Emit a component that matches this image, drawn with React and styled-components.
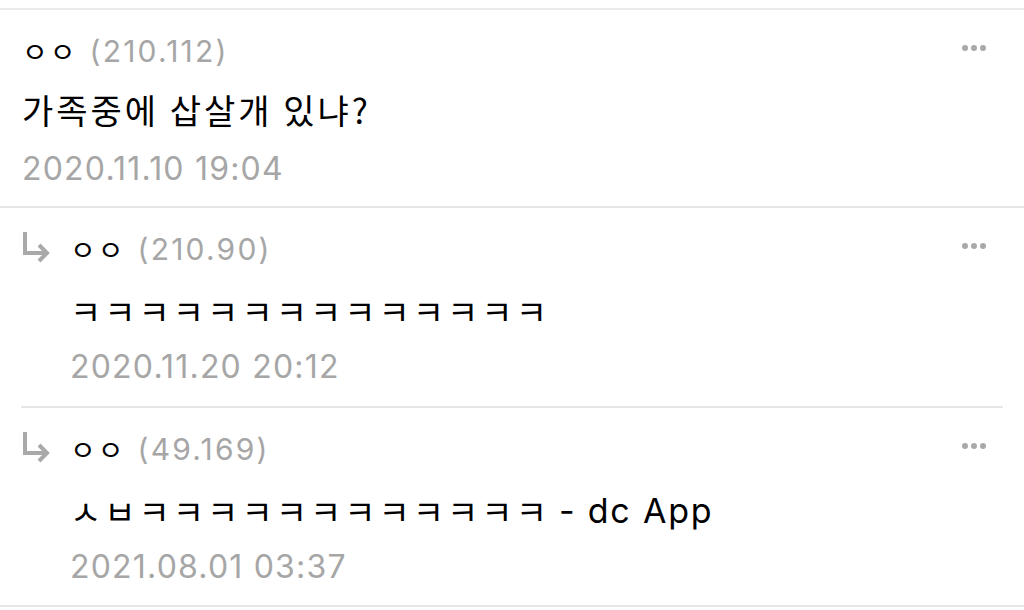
import React from "react";
import styled, { createGlobalStyle } from "styled-components";

const Global = createGlobalStyle`
  html, body { margin: 0; padding: 0; background: #fff; }
  body {
    font-family: Inter, "Noto Sans CJK KR", sans-serif;
    -webkit-font-smoothing: antialiased;
  }
`;

const List = styled.div`
  width: 1024px;
  height: 610px;
  padding-top: 8px;
  box-sizing: border-box;
  overflow: hidden;
  background: #fff;
`;

const Item = styled.div`
  display: flex;
  border-top: ${(p) => (p.$first ? "2px solid #ebebeb" : "none")};
  border-bottom: 2px solid #e6e6e6;
  margin: 0 ${(p) => (p.$inset ? "21px" : "0")};
  padding: 0 ${(p) => (p.$inset ? "17px" : "38px")} 0 ${(p) => (p.$inset ? "1px" : "22px")};
  height: ${(p) => p.$h}px;
`;

const Wrap = styled.div`
  flex: 1;
  display: flex;
  align-items: flex-start;
`;

const Arrow = styled.svg`
  flex: none;
  width: 30px;
  height: 34px;
  margin-top: 22px;
  margin-right: 18px;
`;

const Body = styled.div`
  flex: 1;
  display: flex;
  flex-direction: column;
  padding-top: 16px;
`;

const NameLine = styled.div`
  display: flex;
  align-items: center;
  height: 50px;
`;

const Nick = styled.span`
  font-family: "Noto Sans CJK KR", sans-serif;
  font-size: 28px;
  color: #000;
  letter-spacing: 2px;
`;

const Ip = styled.span`
  font-family: Inter, sans-serif;
  font-size: 30px;
  letter-spacing: 2.2px;
  color: #a6a6a6;
  margin-left: 12px;
`;

const Dots = styled.div`
  margin-left: auto;
  margin-top: -6px;
  display: flex;
  gap: 3px;
  align-self: center;
`;

const Dot = styled.span`
  width: 6px;
  height: 6px;
  border-radius: 50%;
  background: #a9a9a9;
`;

const Content = styled.div`
  display: flex;
  align-items: center;
  height: 74px;
  margin-top: ${(p) => (p.$reply ? -1 : -4)}px;
  margin-bottom: ${(p) => (p.$reply ? 1 : 4)}px;
  font-family: "Noto Sans CJK KR", sans-serif;
  font-size: 34px;
  letter-spacing: 3px;
  color: #000;
  white-space: nowrap;
`;

const Latin = styled.span`
  font-family: Inter, sans-serif;
  font-size: 34px;
  letter-spacing: 1.8px;
  margin-left: 9px;
  white-space: pre;
`;

const DateLine = styled.div`
  display: flex;
  align-items: center;
  height: 36px;
  font-family: Inter, sans-serif;
  font-size: 32px;
  letter-spacing: 1.2px;
  color: #a6a6a6;
`;

const ReplyArrow = () => (
  <Arrow viewBox="0 0 30 34">
    <path d="M3 2 V23 H24" fill="none" stroke="#a9a9a9" strokeWidth="4" />
    <path d="M17 15 L25 23 L17 31" fill="none" stroke="#a9a9a9" strokeWidth="4" />
  </Arrow>
);

const comments = [
  {
    ip: "(210.112)",
    text: [{ k: "가족중에 삽살개 있냐?" }],
    date: "2020.11.10 19:04",
    reply: false,
  },
  {
    ip: "(210.90)",
    text: [{ k: "ㅋㅋㅋㅋㅋㅋㅋㅋㅋㅋㅋㅋㅋㅋ" }],
    date: "2020.11.20 20:12",
    reply: true,
  },
  {
    ip: "(49.169)",
    text: [{ k: "ㅅㅂㅋㅋㅋㅋㅋㅋㅋㅋㅋㅋㅋㅋ" }, { l: "- dc App" }],
    date: "2021.08.01 03:37",
    reply: true,
  },
];

export default function App() {
  return (
    <>
      <Global />
      <List>
        {comments.map((c, i) => (
          <Item
            key={i}
            $first={i === 0}
            $inset={i === 1}
            $h={i === 0 ? 196 : i === 1 ? 198 : 197}
          >
            <Wrap>
              {c.reply && <ReplyArrow />}
              <Body>
                <NameLine>
                  <Nick>ㅇㅇ</Nick>
                  <Ip>{c.ip}</Ip>
                  <Dots>
                    <Dot />
                    <Dot />
                    <Dot />
                  </Dots>
                </NameLine>
                <Content $reply={c.reply}>
                  {c.text.map((t, j) =>
                    t.k ? <span key={j}>{t.k}</span> : <Latin key={j}>{t.l}</Latin>
                  )}
                </Content>
                <DateLine>{c.date}</DateLine>
              </Body>
            </Wrap>
          </Item>
        ))}
      </List>
    </>
  );
}
